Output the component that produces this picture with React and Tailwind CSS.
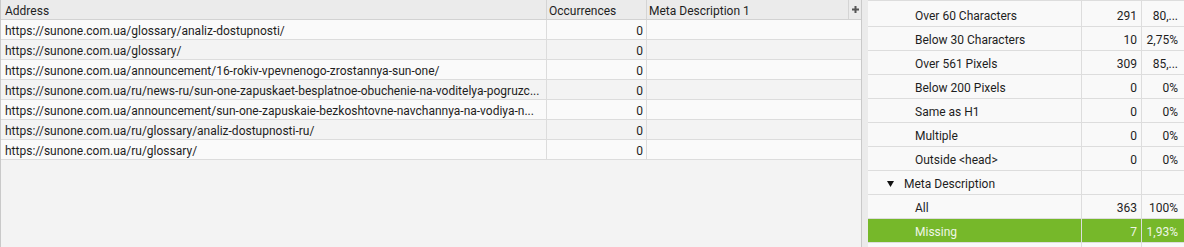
import React from "react";

const urls = [
  "https://sunone.com.ua/glossary/analiz-dostupnosti/",
  "https://sunone.com.ua/glossary/",
  "https://sunone.com.ua/announcement/16-rokiv-vpevnenogo-zrostannya-sun-one/",
  "https://sunone.com.ua/ru/news-ru/sun-one-zapuskaet-besplatnoe-obuchenie-na-voditelya-pogruzc...",
  "https://sunone.com.ua/announcement/sun-one-zapuskaie-bezkoshtovne-navchannya-na-vodiya-n...",
  "https://sunone.com.ua/ru/glossary/analiz-dostupnosti-ru/",
  "https://sunone.com.ua/ru/glossary/",
];

const stats = [
  { label: "Over 60 Characters", count: "291", pct: "80,..." },
  { label: "Below 30 Characters", count: "10", pct: "2,75%" },
  { label: "Over 561 Pixels", count: "309", pct: "85,..." },
  { label: "Below 200 Pixels", count: "0", pct: "0%" },
  { label: "Same as H1", count: "0", pct: "0%" },
  { label: "Multiple", count: "0", pct: "0%" },
  { label: "Outside <head>", count: "0", pct: "0%" },
  { label: "Meta Description", group: true },
  { label: "All", count: "363", pct: "100%" },
  { label: "Missing", count: "7", pct: "1,93%", selected: true },
  { label: "", count: "", pct: "" },
];

export default function App() {
  return (
    <div className="flex w-[1184px] h-[247px] overflow-hidden bg-[#f3f3f3] text-[12px] text-[#1e1e1e] font-['Roboto',sans-serif] leading-none">
      {/* Left table */}
      <div className="w-[862px] shrink-0 border-l border-r border-[#c9c9c9] bg-[#f3f3f3]">
        <div className="flex h-[20px] bg-[#ebebeb] border-b border-[#d2d2d2]">
          <div className="w-[546px] border-r border-[#d4d4d4] pt-[3px] pl-[4px] flex items-center">Address</div>
          <div className="w-[100px] border-r border-[#d4d4d4] pt-[3px] pl-[2px] flex items-center">Occurrences</div>
          <div className="w-[202px] border-r border-[#d4d4d4] pt-[3px] pl-[2px] flex items-center">Meta Description 1</div>
          <div className="flex-1 flex items-center justify-center">
            <svg width="7" height="7" viewBox="0 0 7 7">
              <path d="M2.5 0h2v2.5H7v2H4.5V7h-2V4.5H0v-2h2.5z" fill="#555" />
            </svg>
          </div>
        </div>
        {urls.map((u, i) => (
          <div
            key={i}
            className={`flex h-[20px] border-b border-[#dcdcdc] ${
              i % 2 === 0 ? "bg-[#fafafa]" : "bg-[#f3f3f3]"
            }`}
          >
            <div className="w-[546px] border-r border-[#dcdcdc] pt-[3px] pl-[4px] flex items-center whitespace-nowrap overflow-hidden">
              {u}
            </div>
            <div className="w-[100px] border-r border-[#dcdcdc] pt-[3px] pr-[3px] flex items-center justify-end">0</div>
            <div className="flex-1"></div>
          </div>
        ))}
      </div>

      <div className="w-[6px] shrink-0 bg-[#ebebeb]"></div>

      {/* Right summary */}
      <div className="flex-1 bg-[#f9f9f9] border-t border-[#dddddd]">
        {stats.map((s, i) => (
          <div
            key={i}
            className={`flex border-b border-[#dddddd] ${i === 0 ? "h-[26px]" : "h-[24px]"} ${
              s.selected ? "bg-[#76b82a] text-[#eef6e6]" : ""
            }`}
          >
            <div className={`w-[214px] border-r border-[#dddddd] flex items-center whitespace-nowrap ${i === 0 ? "pt-[5px]" : "pt-[3px]"}`}>
              {s.group ? (
                <span className="flex items-center pl-[19px]">
                  <svg width="7" height="6" viewBox="0 0 7 6" className="mr-[10px] -mt-[1px]">
                    <path d="M0 0h7L3.5 6z" fill="#111" />
                  </svg>
                  {s.label}
                </span>
              ) : (
                <span className="pl-[47px]">{s.label}</span>
              )}
            </div>
            <div className={`w-[60px] border-r border-[#dddddd] pr-[4px] flex items-center justify-end ${i === 0 ? "pt-[5px]" : "pt-[3px]"}`}>{s.count}</div>
            <div className={`flex-1 pr-[6px] flex items-center justify-end whitespace-nowrap ${i === 0 ? "pt-[5px]" : "pt-[3px]"}`}>{s.pct}</div>
          </div>
        ))}
      </div>
    </div>
  );
}
